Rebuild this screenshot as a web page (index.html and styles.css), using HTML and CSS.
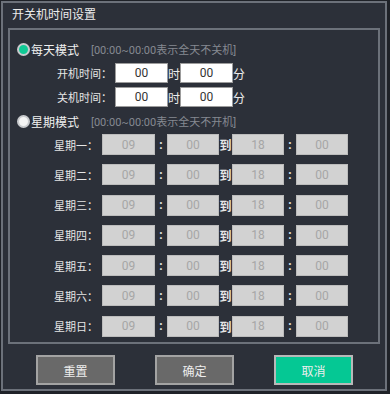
FILE: index.html
```html
<!DOCTYPE html>
<html lang="zh-CN">
<head>
    <meta charset="UTF-8">
    <meta name="viewport" content="width=device-width, initial-scale=1.0">
    <title>开关机时间设置</title>
    <link rel="stylesheet" href="styles.css">
</head>
<body>
    <div class="dialog">
        <div class="title">开关机时间设置</div>

        <div class="panel">
            <div class="mode-row">
                <span class="radio checked"></span>
                <span class="mode-name">每天模式</span>
                <span class="hint">[00:00~00:00表示全天不关机]</span>
            </div>

            <div class="daily-row">
                <span class="label">开机时间：</span>
                <input class="time-box" type="text" value="00">
                <span class="unit">时</span>
                <input class="time-box" type="text" value="00">
                <span class="unit">分</span>
            </div>
            <div class="daily-row">
                <span class="label">关机时间：</span>
                <input class="time-box" type="text" value="00">
                <span class="unit">时</span>
                <input class="time-box" type="text" value="00">
                <span class="unit">分</span>
            </div>

            <div class="mode-row second">
                <span class="radio"></span>
                <span class="mode-name">星期模式</span>
                <span class="hint">[00:00~00:00表示全天不开机]</span>
            </div>

            <div class="week-list" id="weekList"></div>
        </div>

        <div class="buttons">
            <button class="btn">重置</button>
            <button class="btn">确定</button>
            <button class="btn cancel">取消</button>
        </div>
    </div>

    <script>
        var days = ["一", "二", "三", "四", "五", "六", "日"];
        var list = document.getElementById("weekList");

        days.forEach(function (d) {
            var row = document.createElement("div");
            row.className = "week-row";
            row.innerHTML =
                '<span class="label">星期' + d + '：</span>' +
                '<input class="week-box" type="text" value="09" disabled>' +
                '<span class="sep">:</span>' +
                '<input class="week-box" type="text" value="00" disabled>' +
                '<span class="sep">到</span>' +
                '<input class="week-box" type="text" value="18" disabled>' +
                '<span class="sep">:</span>' +
                '<input class="week-box" type="text" value="00" disabled>';
            list.appendChild(row);
        });
    </script>
</body>
</html>
```

FILE: styles.css
```css
body {
    margin: 0;
    background: #1f2228;
    font-family: Roboto, "Noto Sans CJK SC", sans-serif;
    color: #e4e4e4;
}
.dialog {
    box-sizing: border-box;
    margin: 1px;
    width: 386px;
    height: 390px;
    border: 2px solid #6c717a;
    background: #2c3039;
}
.title {
    height: 25px;
    padding-left: 9px;
    font-size: 12px;
    line-height: 24px;
    color: #ececec;
}
.panel {
    box-sizing: border-box;
    margin: 0 5px;
    height: 316px;
    border: 2px solid #6c717a;
    padding-top: 8px;
}
.mode-row {
    display: flex;
    align-items: center;
    height: 22px;
    padding-left: 7px;
}
.mode-row.second {
    margin-top: 3px;
}
.radio {
    box-sizing: border-box;
    width: 13px;
    height: 13px;
    border-radius: 50%;
    border: 2px solid #c9cbce;
    background: #f4f4f4;
}
.radio.checked {
    background: #10c995;
}
.mode-name {
    margin-left: 1px;
    font-size: 12px;
    color: #f0f0f0;
}
.hint {
    margin-left: 12px;
    font-size: 11px;
    color: #858991;
}
.daily-row {
    display: flex;
    align-items: center;
    height: 20px;
    margin-top: 3px;
}
.daily-row + .daily-row {
    margin-top: 4px;
}
.label {
    text-align: right;
    font-family: "Noto Sans CJK TC", sans-serif;
    font-size: 11px;
    color: #e6e6e6;
}
.daily-row .label {
    width: 102px;
    padding-right: 3px;
}
.time-box {
    box-sizing: border-box;
    width: 53px;
    height: 20px;
    margin: 0;
    padding: 0;
    border: 1px solid #9c9c9c;
    background: #ffffff;
    color: #333333;
    font-family: Roboto, sans-serif;
    font-size: 12px;
    text-align: center;
}
.unit {
    width: 12px;
    font-size: 12px;
    color: #ececec;
    text-align: center;
}
.week-list {
    display: flex;
    flex-direction: column;
    gap: 9.3px;
    margin-top: 2px;
}
.week-row {
    display: grid;
    grid-template-columns: 92px 53px 12px 52px 13px 52px 12px 52px;
    align-items: center;
    height: 21px;
}
.week-row .label {
    padding-right: 4px;
}
.week-box {
    box-sizing: border-box;
    width: 100%;
    height: 21px;
    margin: 0;
    padding: 0;
    border: 1px solid #bcbcbc;
    background: #d2d2d2;
    color: #a6a6a6;
    font-family: Roboto, sans-serif;
    font-size: 12px;
    text-align: center;
}
.sep {
    text-align: center;
    font-size: 12px;
    font-weight: bold;
    color: #e6e6e6;
}
.buttons {
    display: flex;
    gap: 40px;
    padding-left: 33px;
    margin-top: 11px;
}
.btn {
    box-sizing: border-box;
    width: 79px;
    height: 30px;
    border: 2px solid #a3a3a3;
    background: #696969;
    color: #eeeeee;
    font-family: "Noto Sans CJK SC", sans-serif;
    font-size: 12px;
    padding: 0;
}
.btn.cancel {
    background: #05c894;
    border-color: #b8b8b8;
}
```
